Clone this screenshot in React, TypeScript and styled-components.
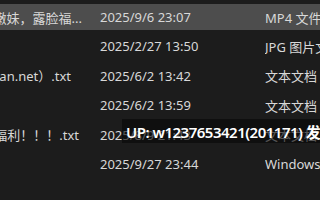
import React from 'react'
import styled, { createGlobalStyle } from 'styled-components'

const GlobalStyle = createGlobalStyle`
  html, body {
    margin: 0;
    padding: 0;
    background: #1c1c1c;
    overflow: hidden;
  }
  body {
    font-family: "Noto Sans", "Noto Sans CJK SC", sans-serif;
  }
`

interface FileRow {
  name: string
  trail: number
  date: string
  type: string
  selected?: boolean
}

const rows: FileRow[] = [
  { name: '清纯嫩妹，露脸福...', trail: 18, date: '2025/9/6 23:07', type: 'MP4 文件', selected: true },
  { name: '', trail: 0, date: '2025/2/27 13:50', type: 'JPG 图片文件' },
  { name: '（www.han.net）.txt', trail: 29, date: '2025/6/2 13:42', type: '文本文档' },
  { name: '', trail: 0, date: '2025/6/2 13:59', type: '文本文档' },
  { name: '超多福利！！！.txt', trail: 21, date: '2025/8/9 21:43', type: '文本文档' },
  { name: '', trail: 0, date: '2025/9/27 23:44', type: 'Windows 批处理文件' },
]

const Page = styled.div`
  position: relative;
  width: 320px;
  height: 200px;
  overflow: hidden;
  background: #1c1c1c;
`

const List = styled.div`
  display: flex;
  flex-direction: column;
  gap: 3.4px;
  padding-top: 4px;
`

const Row = styled.div<{ $selected?: boolean }>`
  display: grid;
  grid-template-columns: 100px 165px 1fr;
  align-items: center;
  height: 26px;
  background: ${p => (p.$selected ? '#4d4d4d' : 'transparent')};
  color: #d8d8d8;
  font-size: 13px;
  white-space: nowrap;
`

const NameCell = styled.div<{ $trail: number }>`
  display: flex;
  justify-content: flex-end;
  overflow: hidden;
  padding-right: ${p => p.$trail}px;
`

const Cell = styled.div`
  overflow: hidden;
`

const Watermark = styled.div`
  position: absolute;
  left: 122px;
  top: 119px;
  height: 24px;
  display: flex;
  align-items: center;
  padding: 0 4px;
  background: rgba(8, 8, 8, 0.62);
  color: #ffffff;
  font-size: 15px;
  font-weight: 600;
  letter-spacing: -0.5px;
  white-space: nowrap;
`

export default function App() {
  return (
    <Page>
      <GlobalStyle />
      <List>
        {rows.map((r, i) => (
          <Row key={i} $selected={r.selected}>
            <NameCell $trail={r.trail}>{r.name}</NameCell>
            <Cell>{r.date}</Cell>
            <Cell>{r.type}</Cell>
          </Row>
        ))}
      </List>
      <Watermark>UP: w1237653421(201171) 发布</Watermark>
    </Page>
  )
}
